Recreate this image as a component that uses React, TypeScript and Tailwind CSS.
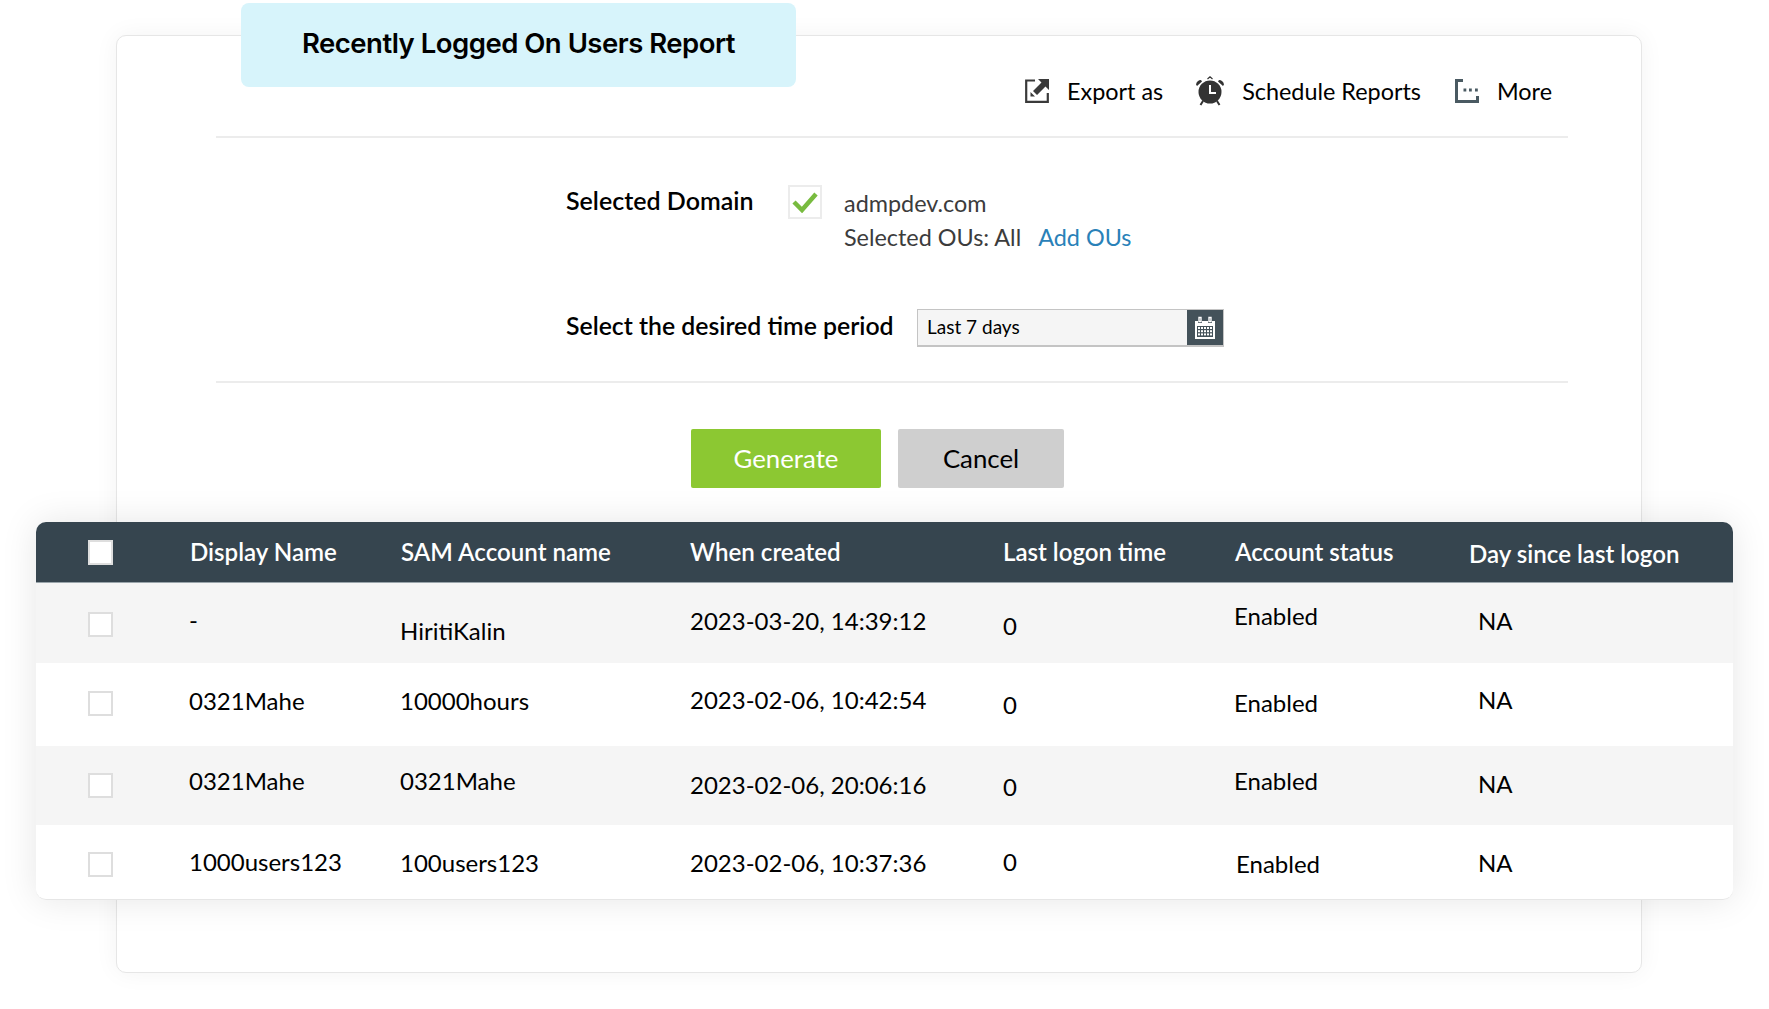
import React from "react";

const rows = [
  {
    bg: "bg-[#f5f5f5]",
    height: "h-[80px]",
    box: "pt-[29px]",
    cells: [
      { text: "-", cls: "pt-[22px] -ml-[1px]" },
      { text: "HiritiKalin", cls: "pt-[33px] -ml-[1px]" },
      { text: "2023-03-20, 14:39:12", cls: "pt-[23px]" },
      { text: "0", cls: "pt-[28px]" },
      { text: "Enabled", cls: "pt-[18px] -ml-[1px]" },
      { text: "NA", cls: "pt-[23px] pl-[9px]" },
    ],
  },
  {
    bg: "bg-white",
    height: "h-[83px]",
    box: "pt-[28px]",
    cells: [
      { text: "0321Mahe", cls: "pt-[23px] -ml-[1px]" },
      { text: "10000hours", cls: "pt-[23px] -ml-[1px]" },
      { text: "2023-02-06, 10:42:54", cls: "pt-[22px]" },
      { text: "0", cls: "pt-[27px]" },
      { text: "Enabled", cls: "pt-[25px] -ml-[1px]" },
      { text: "NA", cls: "pt-[22px] pl-[9px]" },
    ],
  },
  {
    bg: "bg-[#f5f5f5]",
    height: "h-[79px]",
    box: "pt-[27px]",
    cells: [
      { text: "0321Mahe", cls: "pt-[20px] -ml-[1px]" },
      { text: "0321Mahe", cls: "pt-[20px] -ml-[1px]" },
      { text: "2023-02-06, 20:06:16", cls: "pt-[24px]" },
      { text: "0", cls: "pt-[26px]" },
      { text: "Enabled", cls: "pt-[20px] -ml-[1px]" },
      { text: "NA", cls: "pt-[23px] pl-[9px]" },
    ],
  },
  {
    bg: "bg-white",
    height: "h-[75px]",
    box: "pt-[27px]",
    cells: [
      { text: "1000users123", cls: "pt-[22px] -ml-[1px]" },
      { text: "100users123", cls: "pt-[23px] -ml-[1px]" },
      { text: "2023-02-06, 10:37:36", cls: "pt-[23px]" },
      { text: "0", cls: "pt-[22px]" },
      { text: "Enabled", cls: "pt-[24px] ml-[1px]" },
      { text: "NA", cls: "pt-[23px] pl-[9px]" },
    ],
  },
];

const headers = [
  { text: "Display Name", cls: "" },
  { text: "SAM Account name", cls: "" },
  { text: "When created", cls: "" },
  { text: "Last logon time", cls: "" },
  { text: "Account status", cls: "" },
  { text: "Day since last logon", cls: "pt-[17px]" },
];

const gridCols = "grid grid-cols-[154px_211px_289px_313px_232px_234px_1fr]";

const ExportIcon = () => (
  <svg width="24" height="24" viewBox="0 0 24 24" className="shrink-0">
    <path d="M10 1.500H1.200v21.300h21.600V14" fill="none" stroke="#3a3a3a" strokeWidth="2.200" />
    <path d="M13 0h11v11l-3.500-3.500-8.500 8.500-4-4 8.500-8.500z M5.500 13l4.500 4.500H5.500z" fill="#3a3a3a" />
  </svg>
);

const ClockIcon = () => (
  <svg width="30" height="30" viewBox="0 0 30 30" className="shrink-0">
    <path d="M1 8.500C1.500 5.500 3.500 4 6 4l1 1.500-5 4.500z M29 8.500C28.500 5.500 26.500 4 24 4l-1 1.500 5 4.500z" fill="#333" />
    <path d="M12.500 3 15 .8 17.500 3" fill="none" stroke="#333" strokeWidth="1.200" />
    <path d="M8 25l-2.500 4M22 25l2.500 4" stroke="#333" strokeWidth="2" />
    <circle cx="15" cy="16" r="11.500" fill="#333" />
    <path d="M15 9v8h6" fill="none" stroke="#fff" strokeWidth="2" />
  </svg>
);

const MoreIcon = () => (
  <svg width="24" height="24" viewBox="0 0 24 24" className="shrink-0">
    <path d="M8 1.500H1.500v21h21V17" fill="none" stroke="#4a5a62" strokeWidth="3" />
    <path d="M8.500 9.500h2.800v3H8.500z M14 9.500h2.800v3H14z M20 9.500h2.800v3H20z" fill="#4a5a62" />
  </svg>
);

const CalendarIcon = () => (
  <svg width="22" height="24" viewBox="0 0 22 24">
    <path d="M1 5h3v2h4V5h6v2h4V5h3v18H1z" fill="#fff" />
    <path d="M5 1.500h2v4H5z M15 1.500h2v4h-2z" fill="none" stroke="#fff" strokeWidth="1.400" />
    <rect x="3" y="10" width="16" height="11" fill="#44525a" />
    {[0, 1, 2, 3, 4].map((c) =>
      [0, 1, 2].map((r) => (
        <rect key={`${c}-${r}`} x={4 + c * 3} y={11 + r * 3.2} width="2" height="2" fill="#fff" />
      ))
    )}
  </svg>
);

const Box = () => <div className="w-[25px] h-[25px] border-2 border-[#dedede] bg-white"></div>;

export default function App() {
  return (
    <div className="w-[1769px] h-[1009px] bg-white overflow-hidden font-['Lato',sans-serif] text-black">
      <div className="relative ml-[116px] mt-[35px] w-[1526px] h-[938px] bg-white border border-[#e6e6e6] rounded-[10px] shadow-[0_0_24px_rgba(0,0,0,0.05)]">
        <div className="absolute -top-[33px] left-[124px] w-[555px] h-[84px] bg-[#d7f4fb] rounded-[8px] flex items-center justify-center font-['Inter',sans-serif] font-semibold text-[27.500px] tracking-[-0.5px] pb-[2px]">
          Recently Logged On Users Report
        </div>

        <div className="ml-[99px] mr-[73px] h-[102px] border-b-2 border-[#ececec] flex justify-end items-center pb-[16px] pr-[16px] pt-[26px] text-[23.400px] leading-[30px]">
          <div className="flex items-center gap-[18px] mr-[32px]">
            <ExportIcon />
            <span>Export as</span>
          </div>
          <div className="flex items-center gap-[17px] mr-[34px]">
            <ClockIcon />
            <span>Schedule Reports</span>
          </div>
          <div className="flex items-center gap-[18px]">
            <MoreIcon />
            <span>More</span>
          </div>
        </div>

        <div className="ml-[99px] mr-[73px] h-[245px] border-b-2 border-[#ececec] pl-[350px] pt-[47px]">
          <div className="flex items-start">
            <div className="w-[222px] font-semibold text-[25px] leading-[30px]">Selected Domain</div>
            <div className="w-[34px] h-[34px] border-2 border-[#ececec] flex items-center justify-center">
              <svg width="26" height="22" viewBox="0 0 26 22">
                <path d="M2 11l8 8L24 3" fill="none" stroke="#78bb3f" strokeWidth="4.500" />
              </svg>
            </div>
            <div className="ml-[22px] text-[23.400px] leading-[34px] text-[#3c3c3c] pt-[1px]">
              <div>admpdev.com</div>
              <div>
                Selected OUs: All<span className="ml-[17px] text-[#2a81b8]">Add OUs</span>
              </div>
            </div>
          </div>
          <div className="flex items-center mt-[55px]">
            <div className="w-[351px] font-semibold text-[24.800px] leading-[30px] whitespace-nowrap pb-[4px]">
              Select the desired time period
            </div>
            <div className="w-[307px] h-[38px] flex bg-[#f5f5f5] border border-[#c4c4c4] border-b-2">
              <div className="flex-1 pl-[9px] text-[19px] leading-[34px]">Last 7 days</div>
              <div className="w-[36px] bg-[#44525a] flex items-center justify-center">
                <CalendarIcon />
              </div>
            </div>
          </div>
        </div>

        <div className="flex justify-start gap-[17px] pl-[574px] pt-[46px]">
          <button className="w-[190px] h-[59px] rounded-[2px] bg-[#8cc832] text-white text-[25.800px]">Generate</button>
          <button className="w-[166px] h-[59px] rounded-[2px] bg-[#cfcfcf] text-black text-[25.800px]">Cancel</button>
        </div>

        <div className="relative ml-[-81px] mr-[-92px] mt-[34px] rounded-[10px] shadow-[0_0_36px_rgba(0,0,0,0.1)] bg-white">
          <div className={`${gridCols} h-[61px] bg-[#36454f] rounded-t-[10px] text-white font-semibold text-[24.100px] leading-[30px] border-b border-[#9aa5ab]`}>
            <div className="pl-[52px] pt-[18px]">
              <div className="w-[25px] h-[25px] bg-white border-2 border-[#dedede]"></div>
            </div>
            {headers.map((h) => (
              <div key={h.text} className={`whitespace-nowrap ${h.cls || "pt-[15px]"}`}>
                {h.text}
              </div>
            ))}
          </div>
          {rows.map((row, i) => (
            <div
              key={i}
              className={`${gridCols} ${row.height} ${row.bg} text-[24px] leading-[30px] ${i === rows.length - 1 ? "rounded-b-[10px] border-b border-[#e6e6e6]" : ""}`}
            >
              <div className={`pl-[52px] ${row.box}`}>
                <Box />
              </div>
              {row.cells.map((c, j) => (
                <div key={j} className={`whitespace-nowrap ${c.cls}`}>
                  {c.text}
                </div>
              ))}
            </div>
          ))}
        </div>
      </div>
    </div>
  );
}
